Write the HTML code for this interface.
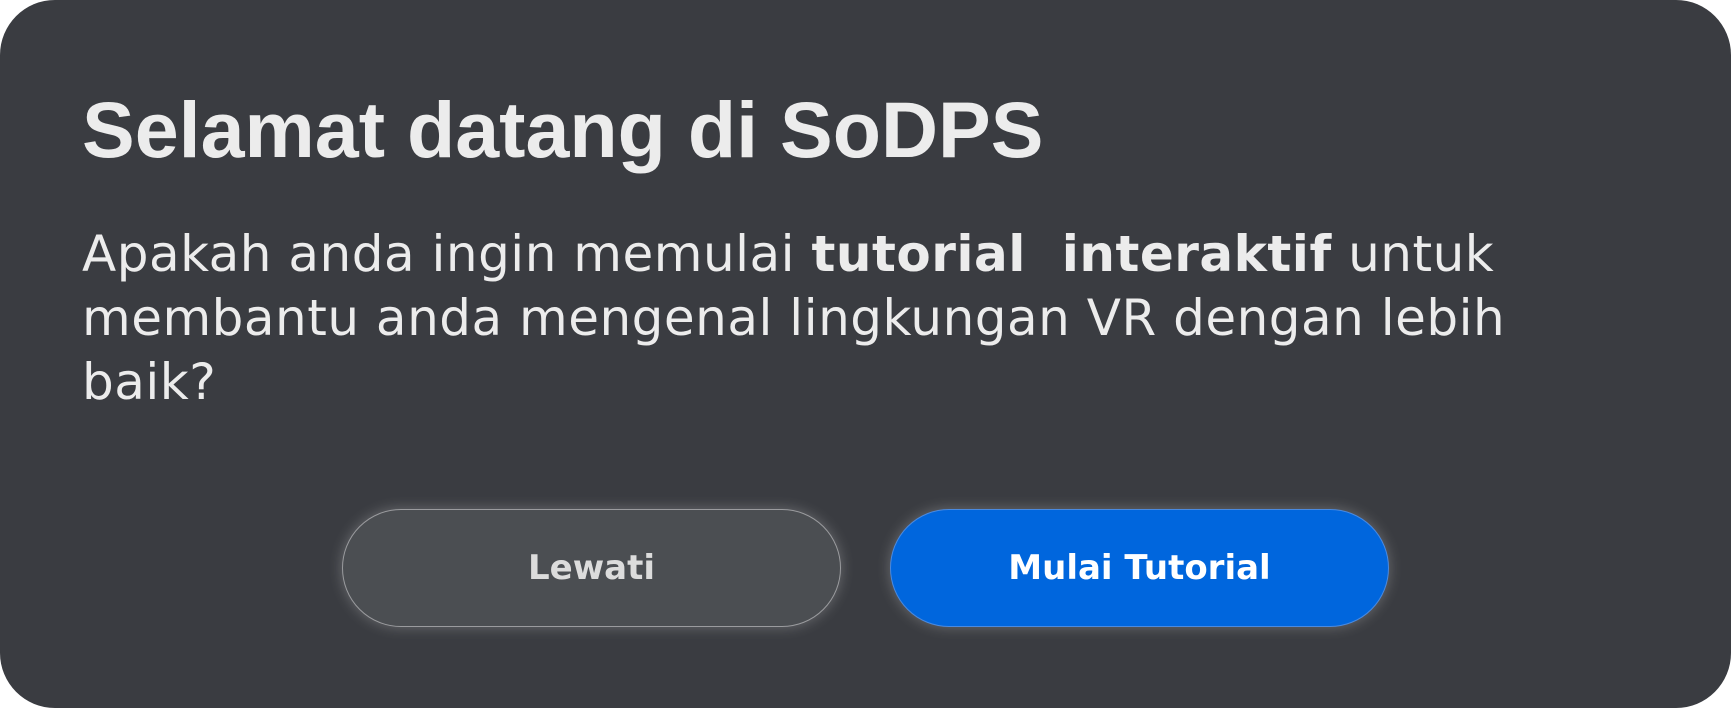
<!DOCTYPE html>
<html><head><style>
html,body{margin:0;padding:0;width:1731px;height:708px;background:#fff;overflow:hidden}
.card{position:absolute;left:0;top:0;width:1731px;height:708px;background:#3a3c41;border-radius:55px}
h1{position:absolute;left:82px;top:84px;margin:0;font:bold 79px "Liberation Sans",sans-serif;color:#ececec;white-space:nowrap}
p{position:absolute;left:82px;top:222px;margin:0;width:1520px;font:50px/64px "DejaVu Sans","Liberation Sans",sans-serif;color:#ececec;letter-spacing:0.5px}
.btn{position:absolute;top:509px;width:499px;height:118px;border-radius:59px;box-sizing:border-box;display:flex;align-items:center;justify-content:center;font:bold 34px "DejaVu Sans","Liberation Sans",sans-serif;box-shadow:0 0 14px rgba(255,255,255,0.25)}
.b1{left:342px;background:#4b4e52;border:1.5px solid #9a9b9e;color:#dcdcdc}
.b2{left:890px;background:#0066dd;border:1.5px solid #4a8ae0;color:#fff}
</style></head><body>
<div class="card">
<h1>Selamat datang di SoDPS</h1>
<p>Apakah anda ingin memulai <b>tutorial&nbsp; interaktif</b> untuk membantu anda mengenal lingkungan VR dengan lebih baik?</p>
<div class="btn b1">Lewati</div>
<div class="btn b2">Mulai Tutorial</div>
</div>
</body></html>
